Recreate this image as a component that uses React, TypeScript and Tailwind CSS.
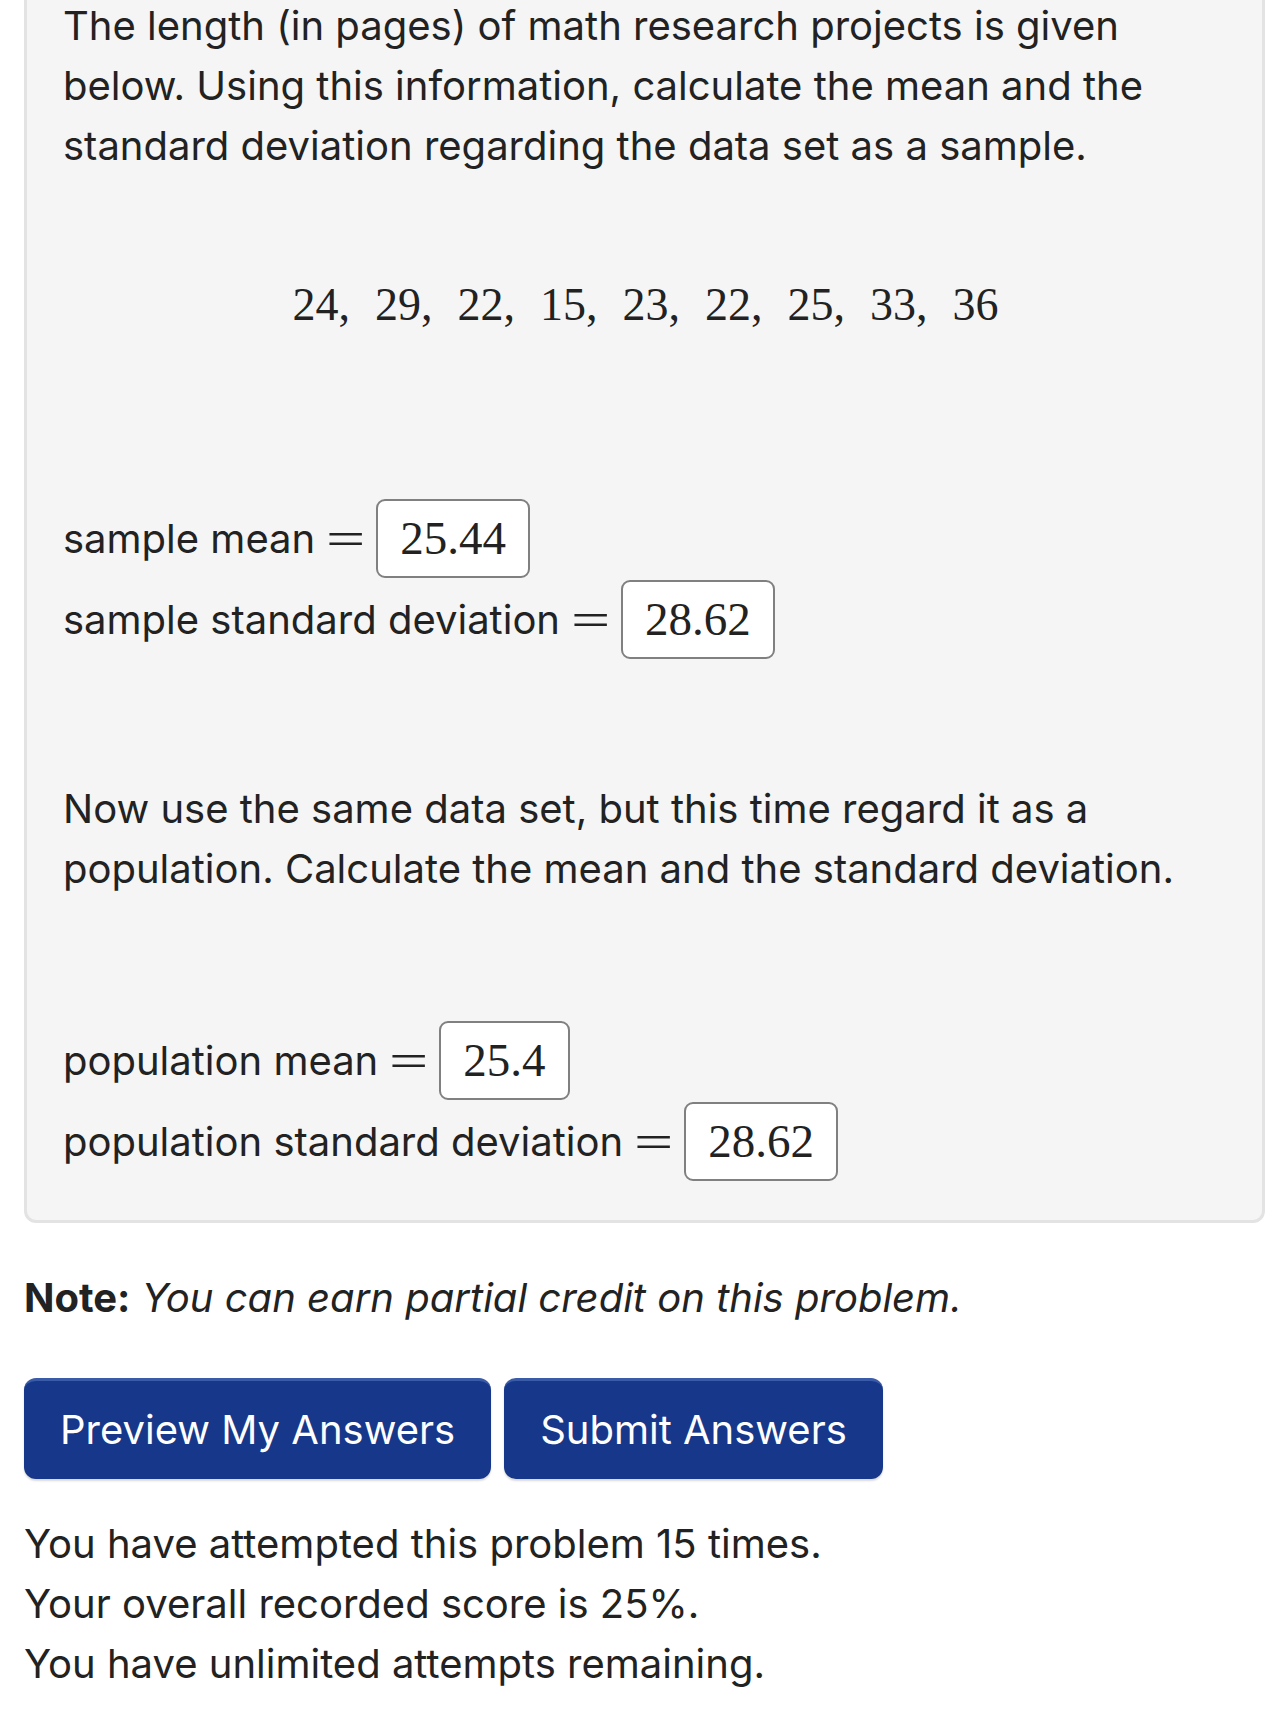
import React from 'react';

const data = [24, 29, 22, 15, 23, 22, 25, 33, 36];

const AnswerBox: React.FC<{ value: string }> = ({ value }) => (
  <span className="inline-flex h-[79px] items-center rounded-[9px] border-2 border-[#808080] bg-white px-[22px] font-['Liberation_Serif',serif] text-[47px] leading-none text-[#222]">
    {value}
  </span>
);

const AnswerRow: React.FC<{ label: string; value: string }> = ({ label, value }) => (
  <div className="flex h-[81px] items-center">
    <span>{label}</span>
    <span className="mx-[17px] inline-block scale-x-[1.45] font-['Liberation_Serif',serif] text-[48px] leading-none">=</span>
    <AnswerBox value={value} />
  </div>
);

export default function App() {
  return (
    <div className="min-h-[1712px] overflow-hidden bg-white font-['Inter','Noto_Sans',sans-serif] text-[40px] leading-[60px] text-[#222]">
      <div className="pl-[24px] pr-[14px]">
        {/* problem card, its top is scrolled off */}
        <div className="-mt-[12px] rounded-[12px] border-[3px] border-[#e3e3e3] bg-[#f5f5f5] pb-[38px] pl-[36px] pr-[54px] pt-[5px]">
          <p>
            The length (in pages) of math research projects is given below. Using this information, calculate the mean and the
            standard deviation regarding the data set as a sample.
          </p>

          <div className="mt-[99px] ml-[10px] mr-[-10px] flex justify-center font-['Liberation_Serif',serif] text-[46px] leading-[60px]">
            {data.map((d, i) => (
              <span key={i} className={i < data.length - 1 ? 'mr-[25px]' : ''}>
                {d}
                {i < data.length - 1 ? ',' : ''}
              </span>
            ))}
          </div>

          <div className="mt-[163px]">
            <AnswerRow label="sample mean" value="25.44" />
            <AnswerRow label="sample standard deviation" value="28.62" />
          </div>

          <p className="mt-[119px]">
            Now use the same data set, but this time regard it as a population. Calculate the mean and the standard deviation.
          </p>

          <div className="mt-[121px]">
            <AnswerRow label="population mean" value="25.4" />
            <AnswerRow label="population standard deviation" value="28.62" />
          </div>
        </div>

        <p className="mt-[45px]">
          <b className="font-bold">Note:</b> <i>You can earn partial credit on this problem.</i>
        </p>

        <div className="mt-[50px] flex gap-[13px]">
          <button className="h-[101px] rounded-[12px] border-t-[3px] border-[#3a5ba8] bg-[#16378a] px-[36px] text-white shadow-[0_2px_2px_rgba(0,0,0,0.15)]">
            Preview My Answers
          </button>
          <button className="h-[101px] rounded-[12px] border-t-[3px] border-[#3a5ba8] bg-[#16378a] px-[36px] text-white shadow-[0_2px_2px_rgba(0,0,0,0.15)]">
            Submit Answers
          </button>
        </div>

        <div className="mt-[35px]">
          <p>You have attempted this problem 15 times.</p>
          <p>Your overall recorded score is 25%.</p>
          <p>You have unlimited attempts remaining.</p>
        </div>
      </div>
    </div>
  );
}
